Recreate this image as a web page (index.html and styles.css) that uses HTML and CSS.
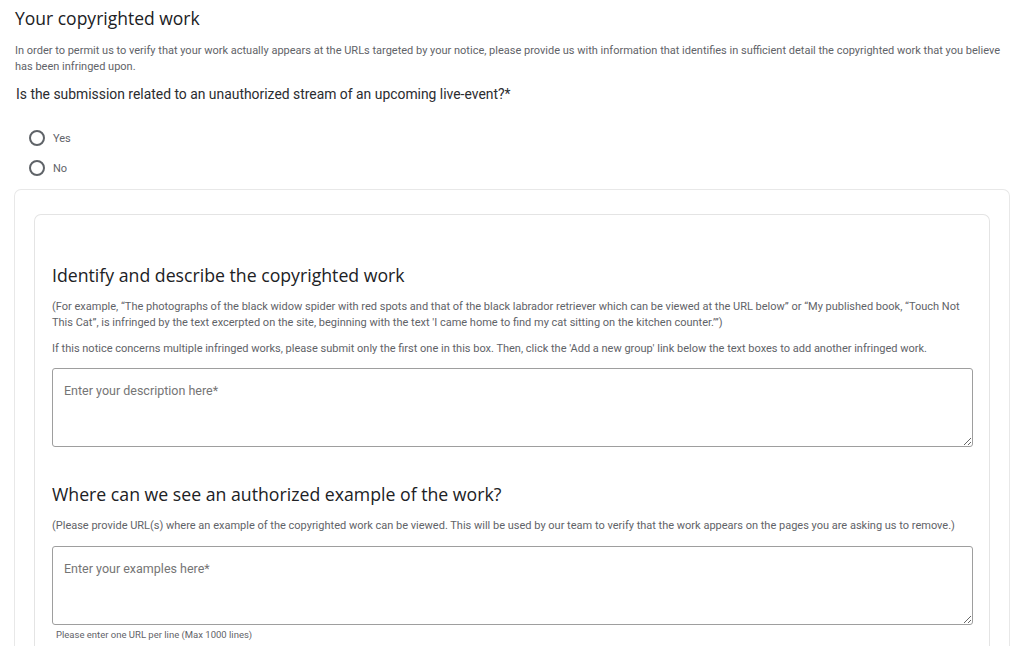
FILE: index.html
```html
<!DOCTYPE html>
<html lang="en">
<head>
<meta charset="utf-8">
<title>Your copyrighted work</title>
<link rel="stylesheet" href="styles.css">
</head>
<body>
<main class="page">
  <h1 class="title">Your copyrighted work</h1>
  <p class="intro">In order to permit us to verify that your work actually appears at the URLs targeted by your notice, please provide us with information that identifies in sufficient detail the copyrighted work that you believe has been infringed upon.</p>
  <p class="question">Is the submission related to an unauthorized stream of an upcoming live-event?*</p>
  <div class="radios">
    <label class="radio"><span class="dot"></span><span class="radio-label">Yes</span></label>
    <label class="radio"><span class="dot"></span><span class="radio-label">No</span></label>
  </div>
  <section class="outer-card">
    <div class="inner-card">
      <h2 class="field-title">Identify and describe the copyrighted work</h2>
      <p class="help">(For example, “The photographs of the black widow spider with red spots and that of the black labrador retriever which can be viewed at the URL below” or “My published book, “Touch Not This Cat”, is infringed by the text excerpted on the site, beginning with the text 'I came home to find my cat sitting on the kitchen counter.’”)</p>
      <p class="help before-box">If this notice concerns multiple infringed works, please submit only the first one in this box. Then, click the 'Add a new group' link below the text boxes to add another infringed work.</p>
      <textarea class="box" placeholder="Enter your description here*"></textarea>
      <h2 class="field-title second">Where can we see an authorized example of the work?</h2>
      <p class="help last">(Please provide URL(s) where an example of the copyrighted work can be viewed. This will be used by our team to verify that the work appears on the pages you are asking us to remove.)</p>
      <textarea class="box" placeholder="Enter your examples here*"></textarea>
      <p class="hint">Please enter one URL per line (Max 1000 lines)</p>
    </div>
  </section>
</main>
</body>
</html>
```

FILE: styles.css
```css
html, body {
  margin: 0;
  padding: 0;
  background: #ffffff;
}
body {
  font-family: Roboto, "Liberation Sans", Arial, sans-serif;
  color: #202124;
  overflow: hidden;
}
.page {
  padding: 6px 14px 0 14px;
}
.title {
  font-family: "Open Sans", Roboto, sans-serif;
  font-weight: 400;
  font-size: 17.5px;
  line-height: 24px;
  margin: 0 0 0 1px;
  color: #202124;
}
.intro {
  font-size: 11px;
  line-height: 16px;
  color: #5f6368;
  margin: 13px 0 0 1px;
  padding-right: 10px;
}
.question {
  font-size: 13.9px;
  line-height: 20px;
  margin: 9px 0 0 2px;
  color: #2b2c2f;
}
.radios {
  display: flex;
  flex-direction: column;
  gap: 14px;
  margin: 26px 0 0 15px;
}
.radio {
  display: flex;
  align-items: center;
  gap: 8px;
  height: 16px;
}
.dot {
  width: 12px;
  height: 12px;
  border: 2px solid #5f6368;
  border-radius: 50%;
  box-sizing: content-box;
}
.radio-label {
  font-size: 11px;
  color: #5f6368;
}
.outer-card {
  margin-top: 13px;
  border: 1px solid #e8e8e8;
  border-bottom: none;
  border-radius: 7px 7px 0 0;
  padding: 24px 19px 0 19px;
  width: 956px;
  height: 470px;
}
.inner-card {
  border: 1px solid #e4e4e4;
  border-bottom: none;
  border-radius: 7px 7px 0 0;
  padding: 48px 17px 0 17px;
  height: 420px;
}
.field-title {
  font-family: "Open Sans", Roboto, sans-serif;
  font-weight: 400;
  font-size: 17.7px;
  line-height: 24px;
  margin: 0 0 12px 0;
  color: #202124;
}
.field-title.second {
  margin-top: 35px;
}
.help {
  font-size: 11px;
  line-height: 16px;
  color: #5f6368;
  margin: 0 0 10px 0;
}
.help.before-box {
  margin-bottom: 11px;
}
.help.last {
  margin-bottom: 12px;
}
.box {
  display: block;
  box-sizing: border-box;
  width: 921px;
  height: 79px;
  margin: 0;
  padding: 14px 11px 10px 11px;
  border: 1px solid #9e9e9e;
  border-radius: 3px;
  font-family: Roboto, "Liberation Sans", Arial, sans-serif;
  font-size: 12.5px;
  color: #202124;
  background: #fff;
}
.box::placeholder {
  color: #757575;
}
.hint {
  font-size: 9.5px;
  line-height: 12px;
  color: #5f6368;
  margin: 4px 0 0 4px;
}
```
